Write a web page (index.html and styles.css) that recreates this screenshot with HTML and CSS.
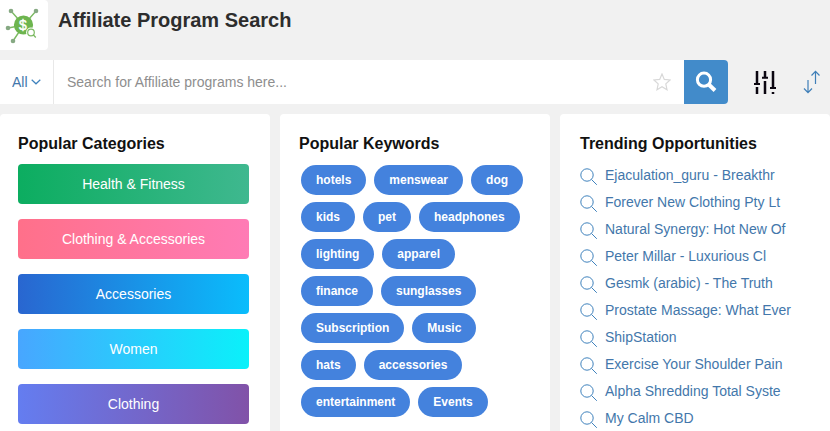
FILE: index.html
```html
<!DOCTYPE html>
<html lang="en">
<head>
  <meta charset="UTF-8" />
  <meta name="viewport" content="width=device-width, initial-scale=1.0" />
  <title>Affiliate Program Search</title>
  <link rel="stylesheet" href="styles.css">
</head>
<body>
  <!-- shared magnifier for the trending list -->
  <svg class="defs" aria-hidden="true">
    <symbol id="icon-search" viewBox="0 0 18 18">
      <circle cx="7" cy="7" r="6.2" />
      <path d="M11.5 11.5 L16.8 16.8" />
    </symbol>
  </svg>

  <header class="page-header">
    <div class="logo">
      <svg width="48" height="50" viewBox="0 0 48 50">
        <g stroke="#7cba62" stroke-width="1.4">
          <path d="M11 11 L19 20 M36 11 L29 19 M8 28 L16 26.5 M13 41 L19 32" />
        </g>
        <g fill="#86a983">
          <circle cx="11" cy="11" r="2.3" />
          <circle cx="36" cy="11" r="2.3" />
          <circle cx="8" cy="28" r="2.3" />
          <circle cx="13" cy="41" r="2.3" />
        </g>
        <circle cx="23.5" cy="25" r="9.6" fill="#6db54f" />
        <text class="logo-sign" x="23" y="30" text-anchor="middle">$</text>
        <circle cx="31" cy="32.5" r="4.9" fill="#fff" />
        <circle cx="31" cy="32.5" r="3.3" fill="#fff" stroke="#7cba62" stroke-width="1.2" />
        <path d="M33.2 34.8 L35.8 37.5" stroke="#7cba62" stroke-width="1.3" />
      </svg>
    </div>
    <h1>Affiliate Program Search</h1>
  </header>

  <form class="search-bar">
    <div class="search-group">
      <div class="search-type">
        <select aria-label="Search type">
          <option>All</option>
        </select>
        <svg width="10" height="6" viewBox="0 0 10 6"><path d="M0.7 0.7 L5 4.8 L9.3 0.7" /></svg>
      </div>
      <input type="text" class="search-input" aria-label="Search" placeholder="Search for Affiliate programs here..." />
      <button type="button" class="btn-star" aria-label="Favorite">
        <svg width="18" height="18" viewBox="0 0 18 18"><path d="M9 1 L11.3 6.4 L17 7 L12.8 10.9 L14 16.7 L9 13.8 L4 16.7 L5.2 10.9 L1 7 L6.7 6.4 Z" /></svg>
      </button>
      <button type="submit" class="btn-search" aria-label="Search">
        <svg width="22" height="22" viewBox="0 0 22 22">
          <circle cx="9" cy="8.7" r="6.6" />
          <path d="M13.5 13.2 L20 19.5" stroke-width="4" />
        </svg>
      </button>
    </div>
    <button type="button" class="btn-tool" aria-label="Filters">
      <svg width="24" height="24" viewBox="0 0 24 24" stroke="#0b0610" stroke-width="2.5">
        <path d="M4 1 V14 M4 17 V24 M12 1 V8 M12 11 V24 M20 1 V18 M20 22 V24" />
        <path d="M1 14 H7 M9 7.8 H15 M17 18 H23" stroke-width="2" />
      </svg>
    </button>
    <button type="button" class="btn-tool" aria-label="Sort">
      <svg width="18" height="24" viewBox="0 0 18 24" fill="none" stroke="#3f7fb8" stroke-width="1.2">
        <path d="M5 10 V22.5 M1 18.5 L5 22.7 L9 18.5" />
        <path d="M12.5 14 V1.5 M8.5 5.5 L12.5 1.3 L16.5 5.5" />
      </svg>
    </button>
  </form>

  <main class="panels">
    <section class="panel">
      <h2>Popular Categories</h2>
      <div class="category-list">
        <button type="button" class="category green">Health &amp; Fitness</button>
        <button type="button" class="category pink">Clothing &amp; Accessories</button>
        <button type="button" class="category blue">Accessories</button>
        <button type="button" class="category cyan">Women</button>
        <button type="button" class="category purple">Clothing</button>
      </div>
    </section>

    <section class="panel">
      <h2>Popular Keywords</h2>
      <div class="keyword-list">
        <button type="button" class="keyword">hotels</button>
        <button type="button" class="keyword">menswear</button>
        <button type="button" class="keyword">dog</button>
        <button type="button" class="keyword">kids</button>
        <button type="button" class="keyword">pet</button>
        <button type="button" class="keyword">headphones</button>
        <button type="button" class="keyword">lighting</button>
        <button type="button" class="keyword">apparel</button>
        <button type="button" class="keyword">finance</button>
        <button type="button" class="keyword">sunglasses</button>
        <button type="button" class="keyword">Subscription</button>
        <button type="button" class="keyword">Music</button>
        <button type="button" class="keyword">hats</button>
        <button type="button" class="keyword">accessories</button>
        <button type="button" class="keyword">entertainment</button>
        <button type="button" class="keyword">Events</button>
      </div>
    </section>

    <section class="panel">
      <h2>Trending Opportunities</h2>
      <ul class="trending-list">
        <li><a href="#"><svg><use href="#icon-search" /></svg>Ejaculation_guru - Breakthr</a></li>
        <li><a href="#"><svg><use href="#icon-search" /></svg>Forever New Clothing Pty Lt</a></li>
        <li><a href="#"><svg><use href="#icon-search" /></svg>Natural Synergy: Hot New Of</a></li>
        <li><a href="#"><svg><use href="#icon-search" /></svg>Peter Millar - Luxurious Cl</a></li>
        <li><a href="#"><svg><use href="#icon-search" /></svg>Gesmk (arabic) - The Truth</a></li>
        <li><a href="#"><svg><use href="#icon-search" /></svg>Prostate Massage: What Ever</a></li>
        <li><a href="#"><svg><use href="#icon-search" /></svg>ShipStation</a></li>
        <li><a href="#"><svg><use href="#icon-search" /></svg>Exercise Your Shoulder Pain</a></li>
        <li><a href="#"><svg><use href="#icon-search" /></svg>Alpha Shredding Total Syste</a></li>
        <li><a href="#"><svg><use href="#icon-search" /></svg>My Calm CBD</a></li>
      </ul>
    </section>
  </main>
</body>
</html>
```
FILE: styles.css
```css
* {
  box-sizing: border-box;
}
body {
  margin: 0;
  min-height: 100vh;
  display: flex;
  flex-direction: column;
  background-color: #f1f1f1;
  font-family: "Liberation Sans", Arial, sans-serif;
  font-size: 14px;
  color: #111;
}
button, input, select {
  font-family: inherit;
  font-size: inherit;
  border: none;
  padding: 0;
  margin: 0;
}
button {
  cursor: pointer;
}
h1, h2 {
  margin: 0;
}
.defs {
  display: none;
}

.page-header {
  display: flex;
  gap: 10px;
  margin-bottom: 10px;
}
.logo {
  height: 50px;
  background-color: #fff;
  border-radius: 0 4px 4px 0;
}
.logo-sign {
  font-size: 14px;
  fill: #fff;
  stroke: #fff;
  stroke-width: 0.4;
}
.page-header h1 {
  font-size: 20px;
  line-height: 40px;
  color: #2d2d2d;
}

.search-bar {
  display: flex;
  align-items: center;
  padding-right: 9px;
  margin-bottom: 10px;
}
.search-group {
  flex: 1;
  display: flex;
  height: 44px;
  background-color: #fff;
  border-radius: 0 4px 4px 0;
  overflow: hidden;
  margin-right: 25px;
}
.search-type {
  display: flex;
  align-items: center;
  gap: 3px;
  padding: 0 12px;
  border-right: 1px solid #e8e8e8;
}
.search-type select {
  appearance: none;
  background: none;
  color: #4377ab;
}
.search-type svg {
  fill: none;
  stroke: #3f82bd;
  stroke-width: 1.2;
}
.search-input {
  flex: 1;
  min-width: 0;
  padding: 0 13px;
  background: none;
}
.search-input::placeholder {
  color: #8e8e8e;
}
.btn-star {
  width: 44px;
  background: none;
}
.btn-star svg {
  display: block;
  margin: auto;
  fill: none;
  stroke: #d8d8d8;
  stroke-width: 1.2;
}
.btn-search {
  width: 44px;
  background-color: #428bca;
}
.btn-search svg {
  display: block;
  margin: auto;
  fill: none;
  stroke: #fff;
  stroke-width: 3;
}
.btn-tool {
  background: none;
  margin-right: 26px;
}
.btn-tool:last-child {
  margin-right: 0;
}
.btn-tool svg {
  display: block;
}

.panels {
  flex: 1;
  display: grid;
  grid-template-columns: repeat(3, 1fr);
  gap: 10px;
}
.panel {
  background-color: #fff;
  border-radius: 4px 4px 0 0;
  padding: 20px 20px 0;
}
.panel:first-child {
  padding: 20px 21px 0 18px;
}
.panel:nth-child(2) {
  padding-left: 19px;
}
.panel h2 {
  font-size: 16px;
  line-height: 20px;
  margin-bottom: 10px;
}

.category-list {
  display: grid;
  gap: 15px;
}
.category {
  height: 40px;
  border-radius: 4px;
  color: #fff;
}
.green {
  background: linear-gradient(to right, #0cad60, #3fb88f);
}
.pink {
  background: linear-gradient(to right, #ff708a, #ff7bb5);
}
.blue {
  background: linear-gradient(to right, #2966d0, #0abdfc);
}
.cyan {
  background: linear-gradient(to right, #48a6ff, #0af1fa);
}
.purple {
  background: linear-gradient(to right, #647df0, #8152a8);
}

.keyword-list {
  display: flex;
  flex-wrap: wrap;
  gap: 7px 8px;
  padding: 1px 0 0 2px;
}
.keyword {
  height: 30px;
  padding: 0 15px;
  border-radius: 15px;
  background-color: #4482dd;
  color: #fff;
  font-size: 12px;
  font-weight: bold;
}

.trending-list {
  list-style: none;
  margin: 0;
  padding: 0;
}
.trending-list a {
  display: flex;
  gap: 7px;
  line-height: 22px;
  height: 27px;
  color: #4377ab;
  text-decoration: none;
  white-space: nowrap;
}
.trending-list svg {
  width: 18px;
  height: 18px;
  margin-top: 4px;
  fill: none;
  stroke: #3f82bd;
}
```
